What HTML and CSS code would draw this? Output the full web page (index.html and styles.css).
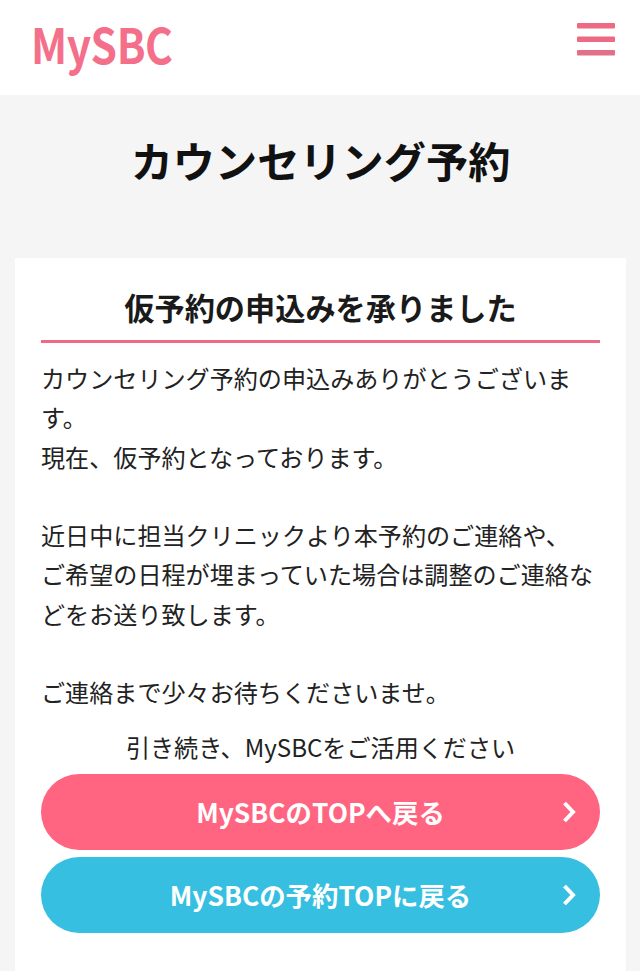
FILE: index.html
```html
<!DOCTYPE html>
<html lang="ja">
<head>
<meta charset="utf-8">
<title>カウンセリング予約</title>
<link rel="stylesheet" href="styles.css">
</head>
<body>
<header class="header">
  <span class="logo">MySBC</span>
  <svg class="menu" width="38" height="33" viewBox="0 0 38 33"><rect x="0" y="0" width="38" height="5.5" rx="1" fill="#ee6a84"/><rect x="0" y="13.5" width="38" height="5.5" rx="1" fill="#ee6a84"/><rect x="0" y="27" width="38" height="5.5" rx="1" fill="#e2708a"/></svg>
</header>
<main class="main">
  <h1 class="title">カウンセリング予約</h1>
  <section class="card">
    <h2 class="subtitle">仮予約の申込みを承りました</h2>
    <p class="body">カウンセリング予約の申込みありがとうございます。<br>現在、仮予約となっております。<br><br>近日中に担当クリニックより本予約のご連絡や、<br>ご希望の日程が埋まっていた場合は調整のご連絡などをお送り致します。<br><br>ご連絡まで少々お待ちくださいませ。</p>
    <p class="note">引き続き、MySBCをご活用ください</p>
    <a class="btn pink">MySBCのTOPへ戻る<svg class="chev" width="18" height="24" viewBox="0 0 18 24"><path d="M3.5 3l8.5 9-8.5 9" fill="none" stroke="#fff" stroke-width="4"/></svg></a>
    <a class="btn blue">MySBCの予約TOPに戻る<svg class="chev" width="18" height="24" viewBox="0 0 18 24"><path d="M3.5 3l8.5 9-8.5 9" fill="none" stroke="#fff" stroke-width="4"/></svg></a>
  </section>
</main>
</body>
</html>
```
FILE: styles.css
```css
* { box-sizing: border-box; }
html, body { margin: 0; height: 100%; }
body { background: #f5f5f5; font-family: "Noto Sans CJK JP", "Noto Sans", sans-serif; color: #222; overflow: hidden; }
.header { height: 95px; background: #fff; display: flex; justify-content: space-between; padding: 15px 25px 0 31px; }
.logo { font-family: "Noto Sans CJK JP", sans-serif; font-weight: 700; font-size: 49px; line-height: 56px; letter-spacing: -0.5px; color: #f4708a; transform: scaleX(0.865); transform-origin: left center; }
.menu { margin-top: 8px; }
.main { padding: 0 14px 0 15px; }
.title { margin: 0; height: 163px; padding-top: 35px; text-align: center; font-size: 42.2px; line-height: 60px; font-weight: 700; color: #111; }
.card { background: #fff; padding: 26px 26px 40px; height: 720px; }
.subtitle { margin: 0; height: 59px; border-bottom: 3px solid #ee6a84; text-align: center; font-size: 30.2px; line-height: 46px; font-weight: 700; color: #1a1a1a; }
.body { margin: 15px 0 0; font-size: 24.1px; line-height: 39.3px; color: #222; }
.note { margin: 17px 0 0; text-align: center; font-size: 24.1px; line-height: 36px; color: #222; }
.btn { position: relative; display: flex; align-items: center; justify-content: center; height: 76px; margin-top: 7px; border-radius: 38px; color: #fff; font-size: 26.4px; font-weight: 700; }
.pink { background: #ff6480; margin-top: 9px; }
.blue { background: #36bfe0; }
.chev { position: absolute; right: 21px; top: 26px; }
```
